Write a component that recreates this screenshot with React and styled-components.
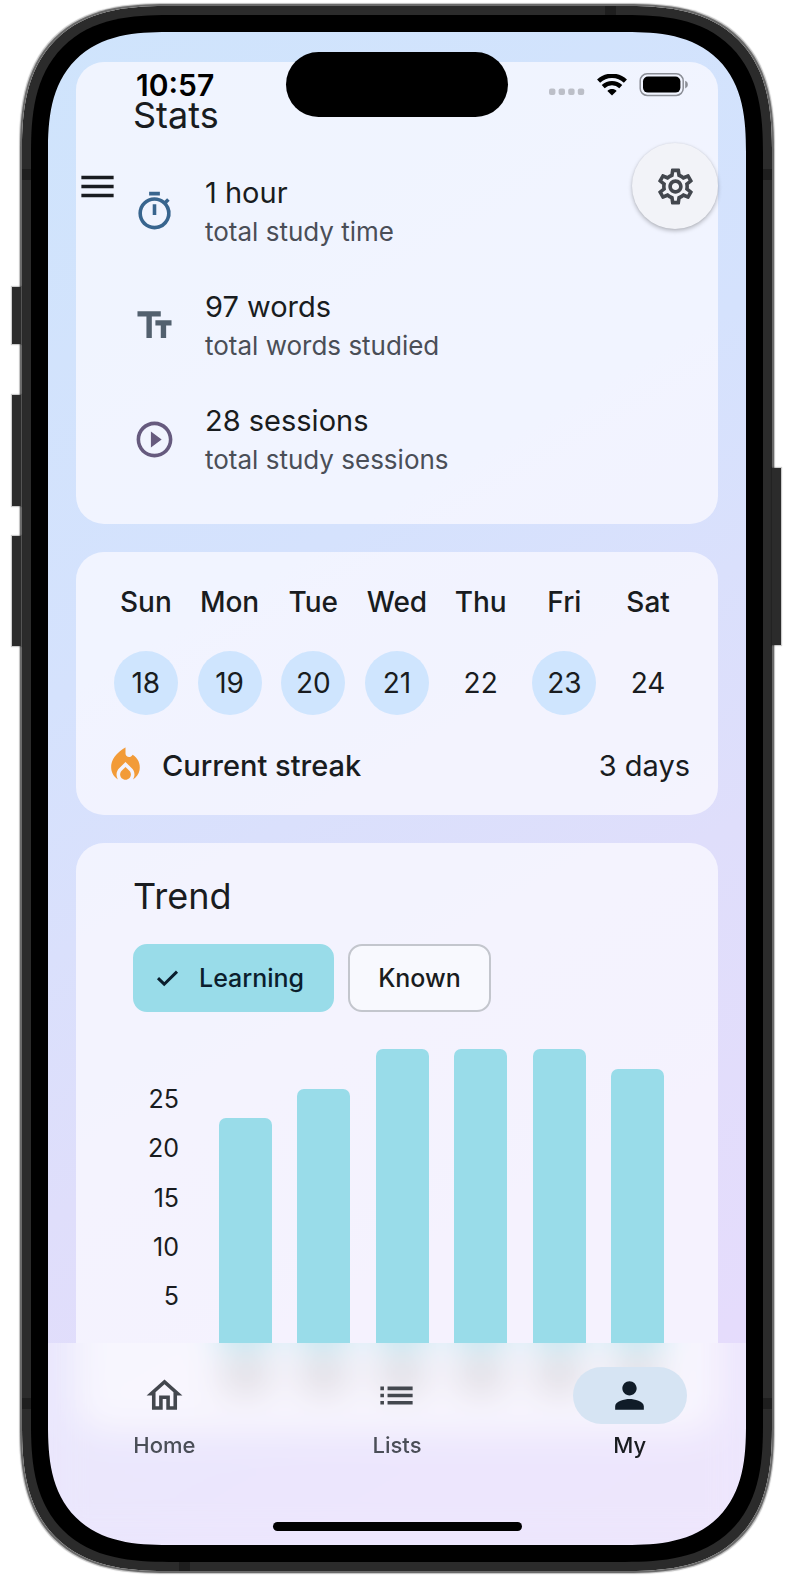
import React, { useState } from "react";
import styled, { createGlobalStyle, css } from "styled-components";
import {
  MdMenu,
  MdOutlineTimer,
  MdTextFields,
  MdPlayCircleOutline,
  MdOutlineSettings,
  MdOutlineHome,
  MdList,
  MdPerson,
  MdLocalFireDepartment,
} from "react-icons/md";

const GlobalStyle = createGlobalStyle`
  * { box-sizing: border-box; }
  body {
    margin: 0;
    background: #ffffff;
    color: #191c20;
    font-family: Inter, "Liberation Sans", sans-serif;
    -webkit-font-smoothing: antialiased;
  }
  button { font: inherit; color: inherit; border: 0; padding: 0; cursor: pointer; }
  h2, p, dl, dd, ul { margin: 0; padding: 0; }
`;

/* ---------- device ---------- */

const corner = (round, smooth) => css`
  border-radius: ${round}px;
  @supports (corner-shape: superellipse(1.4)) {
    border-radius: ${smooth}px;
    corner-shape: superellipse(1.4);
  }
`;

const Phone = styled.div`
  position: relative;
  margin: 4px 18px 4px 20px;
  padding: 9px;
  border: 2px solid #6a6a6a;
  background: #2b2b2b;
  background-clip: padding-box;
  box-shadow: 0 0 1px 1px rgba(0, 0, 0, 0.25);
  ${corner(128, 148)}
`;

const SideButton = styled.span`
  position: absolute;
  width: 9px;
  background: #2b2b2b;
  box-shadow: 0 0 1px 1px rgba(0, 0, 0, 0.2);
  ${(p) => (p.$side === "left" ? "left: -10px;" : "right: -9px;")}
  top: ${(p) => p.$top}px;
  height: ${(p) => p.$height}px;
`;

const AntennaBand = styled.span`
  position: absolute;
  background: #1e1e1e;
  ${(p) =>
    p.$edge === "left" || p.$edge === "right"
      ? "width: 9px; height: 11px;"
      : "width: 11px; height: 9px;"}
  ${(p) => p.$edge}: 0;
  ${(p) => p.$from}: ${(p) => p.$offset}px;
`;

const Bezel = styled.div`
  position: relative;
  padding: 17px;
  background: #000000;
  ${corner(117, 138)}
`;

const Screen = styled.div`
  position: relative;
  overflow: hidden;
  ${corner(100, 120)}
`;

const Canvas = styled.div`
  position: relative;
  will-change: opacity;
  background: linear-gradient(150deg, #cfe4fc 0%, #d5e2fd 35%, #dfdefb 62%, #e5dcfc 88%, #e7dcfb 100%);
`;

/* ---------- status bar ---------- */

const StatusBar = styled.div`
  position: absolute;
  inset: 20px 0 auto;
  z-index: 2;
  display: grid;
  grid-template-columns: 1fr 222px 1fr;
  align-items: center;
`;

const Clock = styled.time`
  padding-left: 88px;
  font-size: 30px;
  line-height: 36px;
  font-weight: 600;
  color: #000000;
`;

const Island = styled.div`
  height: 65px;
  border-radius: 33px;
  background: #000000;
`;

const StatusIcons = styled.div`
  display: flex;
  justify-content: flex-end;
  align-items: center;
  gap: 12px;
  padding-right: 58px;
`;

/* ---------- floating controls ---------- */

const MenuButton = styled.button`
  position: absolute;
  top: 133px;
  left: 28px;
  z-index: 2;
  display: flex;
  background: none;
`;

const SettingsButton = styled.button`
  position: absolute;
  top: 111px;
  right: 28px;
  z-index: 2;
  display: flex;
  align-items: center;
  justify-content: center;
  width: 86px;
  height: 86px;
  border-radius: 50%;
  color: #43474e;
  background: #f2f3f8;
  box-shadow: 0 2px 4px rgba(0, 0, 0, 0.25), 0 0 2px rgba(0, 0, 0, 0.08);
`;

/* ---------- cards ---------- */

const Content = styled.main`
  display: flex;
  flex-direction: column;
  gap: 28px;
  padding: 30px 28px 113px;
`;

const Card = styled.section`
  padding: 28px;
  border-radius: 28px;
  background: rgba(251, 250, 255, 0.74);
`;

const CardTitle = styled.h2`
  padding: 0 29px;
  font-size: 36px;
  line-height: 50px;
  font-weight: 400;
`;

const StatList = styled.ul`
  margin-top: 14px;
  list-style: none;
`;

const StatRow = styled.li`
  display: flex;
  align-items: center;
  gap: 29px;
  height: 114px;
  padding: 0 29px;
`;

const StatIcon = styled.span`
  display: flex;
  color: ${(p) => p.$color};
`;

const StatValue = styled.p`
  font-size: 29px;
  line-height: 42px;
`;

const StatLabel = styled.p`
  font-size: 26px;
  line-height: 36px;
  color: #4a4e57;
`;

const Week = styled.table`
  width: 100%;
  table-layout: fixed;
  border-collapse: collapse;
  text-align: center;
  font-size: 28px;
`;

const WeekDay = styled.th`
  padding: 0 0 26px;
  line-height: 45px;
  font-weight: 500;
`;

const DayCell = styled.td`
  padding: 0;
`;

const DayMark = styled.span`
  display: block;
  width: 64px;
  height: 64px;
  margin: 0 auto;
  line-height: 65px;
  border-radius: 50%;
  background: ${(p) => (p.$studied ? "#cfe5fe" : "transparent")};
`;

const Streak = styled.div`
  display: flex;
  align-items: center;
  margin-top: 29px;
  font-size: 29px;
  line-height: 43px;
`;

const StreakIcon = styled.span`
  display: flex;
  color: #f29b38;
`;

const StreakLabel = styled.span`
  flex: 1;
  padding-left: 15px;
  font-weight: 500;
`;

/* ---------- trend ---------- */

const Filters = styled.div`
  display: flex;
  gap: 14px;
  margin: 23px 29px 37px;
`;

const Filter = styled.button`
  display: flex;
  align-items: center;
  gap: 18px;
  height: 68px;
  padding: 0 28px;
  border-radius: 14px;
  font-size: 25px;
  font-weight: 500;
  border: 2px solid #c3c6cd;
  background: #f8f9fe;
  ${(p) =>
    p.$active &&
    css`
      padding: 0 28px 0 18px;
      color: #0b1e2d;
      border-color: #99dce9;
      background: #99dce9;
    `}
`;

const Chart = styled.div`
  display: flex;
  height: 297px;
  padding: 0 26px 0 29px;
`;

const Axis = styled.div`
  display: flex;
  flex-direction: column;
  width: 46px;
  padding: 25px 0;
  text-align: right;
  font-size: 25px;
`;

const Tick = styled.span`
  flex: 1;
  display: flex;
  align-items: center;
  justify-content: flex-end;
`;

const Bars = styled.div`
  flex: 1;
  display: flex;
  align-items: flex-end;
  justify-content: space-between;
  margin-left: 40px;
`;

const Bar = styled.div`
  width: 53px;
  border-radius: 7px 7px 0 0;
  background: #99dce9;
`;

const BarFooter = styled.div`
  display: flex;
  justify-content: space-between;
  height: 58px;
  padding: 12px 30px 12px 119px;
`;

const BarMark = styled.span`
  width: 46px;
  background: rgba(60, 55, 45, 0.2);
`;

/* ---------- bottom navigation ---------- */

const BottomBar = styled.div`
  position: absolute;
  inset: auto 0 0;
  z-index: 1;
  padding: 24px 0 14px;
`;

/* Reaches above the bar so that the blur takes in what lies over its top edge. */
const Frost = styled.div`
  position: absolute;
  inset: -60px 0 0;
  z-index: -1;
  mask-image: linear-gradient(to bottom, transparent 60px, #000 60px);
  background: rgba(255, 255, 255, 0.3);
  backdrop-filter: blur(17px);
`;

const Tabs = styled.nav`
  display: grid;
  grid-template-columns: repeat(3, 1fr);
`;

const Tab = styled.button`
  display: flex;
  flex-direction: column;
  align-items: center;
  gap: 7px;
  background: none;
  font-size: 22px;
  line-height: 28px;
  font-weight: 500;
  color: ${(p) => (p.$active ? "#191c20" : "#4a4e57")};
`;

const TabIcon = styled.span`
  display: flex;
  align-items: center;
  justify-content: center;
  width: 114px;
  height: 57px;
  border-radius: 29px;
  color: ${(p) => (p.$active ? "#101c28" : "#43474e")};
  background: ${(p) => (p.$active ? "#d6e4f3" : "transparent")};
`;

const HomeIndicator = styled.div`
  width: 249px;
  height: 9px;
  margin: 63px auto 0;
  border-radius: 5px;
  background: #000000;
`;

/* ---------- glyphs ---------- */

const Signal = () => (
  <svg width="36" height="22" viewBox="0 0 36 22" fill="#bcbfc8" aria-hidden="true">
    {[0, 9.6, 19.2, 28.8].map((x) => (
      <rect key={x} x={x} y="14.500" width="6.4" height="6.4" rx="2" />
    ))}
  </svg>
);

const Wifi = () => (
  <svg width="30" height="22" viewBox="0 0 30 22" fill="none" stroke="#000" strokeWidth="4.400" aria-hidden="true">
    <path d="M1.6 7.200C9 0 21 0 28.400 7.200" />
    <path d="M6.200 12.600C11.300 8 18.700 8 23.800 12.600" />
    <path d="M10.400 17C12.800 14.400 17.200 14.400 19.600 17L15 21.600Z" fill="#000" stroke="none" />
  </svg>
);

const Battery = () => (
  <svg width="49" height="24" viewBox="0 0 49 24" aria-hidden="true">
    <rect x="1.200" y=".8" width="43" height="21.600" rx="7" fill="none" stroke="#8b8e96" strokeWidth="1.500" />
    <rect x="4" y="3.600" width="37.400" height="16" rx="5" fill="#000" />
    <path d="M46.200 7.800c2 .8 2.600 2.200 2.600 3.800s-.6 3-2.600 3.800z" fill="#8b8e96" />
  </svg>
);

const Check = () => (
  <svg width="28" height="28" viewBox="0 0 28 28" fill="none" stroke="currentColor" strokeWidth="3" aria-hidden="true">
    <path d="M5 14.200L11.200 20.200L24 7.600" />
  </svg>
);

/* ---------- data ---------- */

const stats = [
  { Icon: MdOutlineTimer, color: "#38658e", value: "1 hour", label: "total study time" },
  { Icon: MdTextFields, color: "#52606e", value: "97 words", label: "total words studied" },
  { Icon: MdPlayCircleOutline, color: "#665a7e", value: "28 sessions", label: "total study sessions" },
];

const week = [
  { name: "Sun", day: 18, studied: true },
  { name: "Mon", day: 19, studied: true },
  { name: "Tue", day: 20, studied: true },
  { name: "Wed", day: 21, studied: true },
  { name: "Thu", day: 22, studied: false },
  { name: "Fri", day: 23, studied: true },
  { name: "Sat", day: 24, studied: false },
];

const ticks = [25, 20, 15, 10, 5];
const trend = [23, 26, 30, 30, 30, 28];
const trendMax = 30;

const tabs = [
  { name: "Home", Icon: MdOutlineHome },
  { name: "Lists", Icon: MdList },
  { name: "My", Icon: MdPerson },
];

export default function App() {
  const [filter, setFilter] = useState("Learning");
  const [tab, setTab] = useState("My");

  return (
    <>
      <GlobalStyle />
      <Phone>
        <SideButton $side="left" $top={281} $height={57} />
        <SideButton $side="left" $top={389} $height={111} />
        <SideButton $side="left" $top={530} $height={110} />
        <SideButton $side="right" $top={462} $height={177} />
        <AntennaBand $edge="top" $from="right" $offset={156} />
        <AntennaBand $edge="bottom" $from="left" $offset={157} />
        <AntennaBand $edge="left" $from="top" $offset={163} />
        <AntennaBand $edge="right" $from="top" $offset={163} />
        <AntennaBand $edge="left" $from="bottom" $offset={162} />
        <AntennaBand $edge="right" $from="bottom" $offset={162} />
        <Bezel>
          <Screen>
            <Canvas>
              <StatusBar>
                <Clock>10:57</Clock>
                <Island />
                <StatusIcons>
                  <Signal />
                  <Wifi />
                  <Battery />
                </StatusIcons>
              </StatusBar>
              <MenuButton aria-label="Menu">
                <MdMenu size={43} />
              </MenuButton>
              <SettingsButton aria-label="Settings">
                <MdOutlineSettings size={43} />
              </SettingsButton>

              <Content>
                <Card>
                  <CardTitle>Stats</CardTitle>
                  <StatList>
                    {stats.map(({ Icon, color, value, label }) => (
                      <StatRow key={label}>
                        <StatIcon $color={color}>
                          <Icon size={43} />
                        </StatIcon>
                        <div>
                          <StatValue>{value}</StatValue>
                          <StatLabel>{label}</StatLabel>
                        </div>
                      </StatRow>
                    ))}
                  </StatList>
                </Card>

                <Card>
                  <Week>
                    <thead>
                      <tr>
                        {week.map((d) => (
                          <WeekDay key={d.name} scope="col">{d.name}</WeekDay>
                        ))}
                      </tr>
                    </thead>
                    <tbody>
                      <tr>
                        {week.map((d) => (
                          <DayCell key={d.day}>
                            <DayMark $studied={d.studied}>{d.day}</DayMark>
                          </DayCell>
                        ))}
                      </tr>
                    </tbody>
                  </Week>
                  <Streak>
                    <StreakIcon>
                      <MdLocalFireDepartment size={43} />
                    </StreakIcon>
                    <StreakLabel>Current streak</StreakLabel>
                    <span>3 days</span>
                  </Streak>
                </Card>

                <Card>
                  <CardTitle>Trend</CardTitle>
                  <Filters>
                    {["Learning", "Known"].map((name) => (
                      <Filter
                        key={name}
                        type="button"
                        $active={filter === name}
                        aria-pressed={filter === name}
                        onClick={() => setFilter(name)}
                      >
                        {filter === name && <Check />}
                        {name}
                      </Filter>
                    ))}
                  </Filters>
                  <Chart>
                    <Axis>
                      {ticks.map((t) => (
                        <Tick key={t}>{t}</Tick>
                      ))}
                    </Axis>
                    <Bars>
                      {trend.map((v, i) => (
                        <Bar key={i} style={{ height: `${(v / trendMax) * 100}%` }} />
                      ))}
                    </Bars>
                  </Chart>
                  <BarFooter aria-hidden="true">
                    {trend.map((v, i) => (
                      <BarMark key={i} />
                    ))}
                  </BarFooter>
                </Card>
              </Content>

              <BottomBar>
                <Frost />
                <Tabs>
                  {tabs.map(({ name, Icon }) => (
                    <Tab key={name} type="button" $active={tab === name} onClick={() => setTab(name)}>
                      <TabIcon $active={tab === name}>
                        <Icon size={43} />
                      </TabIcon>
                      {name}
                    </Tab>
                  ))}
                </Tabs>
                <HomeIndicator />
              </BottomBar>
            </Canvas>
          </Screen>
        </Bezel>
      </Phone>
    </>
  );
}
